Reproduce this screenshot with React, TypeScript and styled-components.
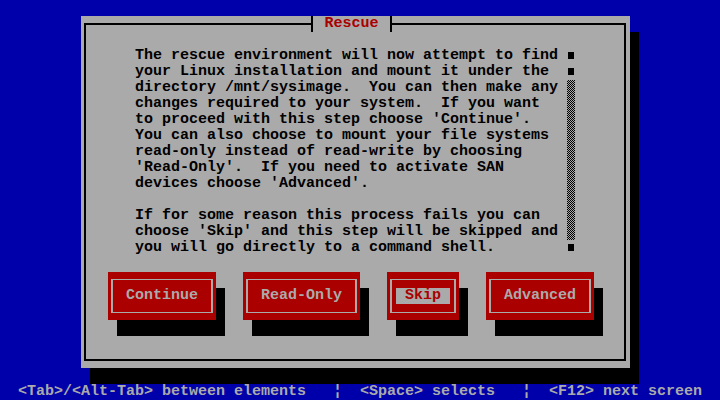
import React from "react";
import styled, { createGlobalStyle } from "styled-components";

const BLUE = "#0000aa";
const GRAY = "#aaaaaa";
const RED = "#aa0000";
const BLACK = "#000000";
const CW = 9;

const Global = createGlobalStyle`
  html, body {
    margin: 0;
    padding: 0;
    background: ${BLUE};
    overflow: hidden;
  }
`;

const Screen = styled.div`
  width: 720px;
  height: 400px;
  background: ${BLUE};
  display: flex;
  flex-direction: column;
  align-items: flex-start;
  font-family: "Liberation Mono", "DejaVu Sans Mono", monospace;
  font-size: 15px;
  line-height: 16px;
  font-weight: bold;
`;

const Dialog = styled.section`
  position: relative;
  margin: 16px 0 0 81px;
  width: 549px;
  height: 352px;
  box-sizing: border-box;
  padding: 7px 4px 7px 3px;
  background: ${GRAY};
  box-shadow: 9px 16px 0 ${BLACK};
  display: flex;
`;

const Frame = styled.div`
  flex: 1;
  border: 2px solid ${BLACK};
  display: flex;
  flex-direction: column;
  padding-top: 23px;
`;

const Title = styled.h1`
  position: absolute;
  top: 0;
  left: 230px;
  width: 81px;
  height: 16px;
  margin: 0;
  box-sizing: border-box;
  border-left: 2px solid ${BLACK};
  border-right: 2px solid ${BLACK};
  background: ${GRAY};
  color: ${RED};
  font: inherit;
  text-align: center;
`;

const TextRow = styled.div`
  display: flex;
  padding-left: 49px;
`;

const Message = styled.pre`
  margin: 0;
  width: 432px;
  font: inherit;
  color: ${BLACK};
  white-space: pre;
`;

const Scrollbar = styled.div`
  display: flex;
  flex-direction: column;
  width: 9px;
`;

const ScrollMark = styled.span`
  display: block;
  width: 6px;
  height: 7px;
  margin: 4px 2px 5px 1px;
  background: ${BLACK};
`;

const ScrollTrack = styled.span<{ $rows: number }>`
  display: block;
  width: 8px;
  height: ${(p) => p.$rows * 16}px;
  background-image: repeating-conic-gradient(${BLACK} 0% 25%, ${GRAY} 0% 50%);
  background-size: 2px 2px;
`;

const ButtonRow = styled.div`
  display: flex;
  gap: 27px;
  padding-left: 22px;
  margin-top: 16px;
`;

const ButtonBox = styled.div<{ $cols: number }>`
  width: ${(p) => p.$cols * CW}px;
  height: 48px;
  box-sizing: border-box;
  padding: 7px 3px;
  background: ${RED};
  box-shadow: 9px 16px 0 ${BLACK};
  display: flex;
`;

const ButtonFrame = styled.div`
  flex: 1;
  border: 1px solid ${GRAY};
  border-left-width: 2px;
  border-right-width: 2px;
  display: flex;
  align-items: center;
  padding: 0 4px;
`;

const ButtonLabel = styled.span<{ $focused?: boolean }>`
  flex: 1;
  height: 16px;
  text-align: center;
  background: ${(p) => (p.$focused ? GRAY : "transparent")};
  color: ${(p) => (p.$focused ? RED : GRAY)};
  white-space: pre;
`;

const StatusBar = styled.footer`
  margin-top: auto;
  width: 720px;
  height: 16px;
  color: ${GRAY};
  background: ${BLUE};
  white-space: pre;
`;

const Button = ({ label, cols, focused }: { label: string; cols: number; focused?: boolean }) => (
  <ButtonBox $cols={cols}>
    <ButtonFrame>
      <ButtonLabel $focused={focused}>{label}</ButtonLabel>
    </ButtonFrame>
  </ButtonBox>
);

const message = [
  "The rescue environment will now attempt to find",
  "your Linux installation and mount it under the",
  "directory /mnt/sysimage.  You can then make any",
  "changes required to your system.  If you want",
  "to proceed with this step choose 'Continue'.",
  "You can also choose to mount your file systems",
  "read-only instead of read-write by choosing",
  "'Read-Only'.  If you need to activate SAN",
  "devices choose 'Advanced'.",
  "",
  "If for some reason this process fails you can",
  "choose 'Skip' and this step will be skipped and",
  "you will go directly to a command shell.",
].join("\n");

export default function App() {
  return (
    <>
      <Global />
      <Screen>
        <Dialog>
          <Title>Rescue</Title>
          <Frame>
            <TextRow>
              <Message>{message}</Message>
              <Scrollbar>
                <ScrollMark />
                <ScrollMark />
                <ScrollTrack $rows={10} />
                <ScrollMark />
              </Scrollbar>
            </TextRow>
            <ButtonRow>
              <Button label="Continue" cols={12} />
              <Button label="Read-Only" cols={13} />
              <Button label="Skip" cols={8} focused />
              <Button label="Advanced" cols={12} />
            </ButtonRow>
          </Frame>
        </Dialog>
        <StatusBar>{"  <Tab>/<Alt-Tab> between elements   ¦  <Space> selects   ¦  <F12> next screen"}</StatusBar>
      </Screen>
    </>
  );
}
